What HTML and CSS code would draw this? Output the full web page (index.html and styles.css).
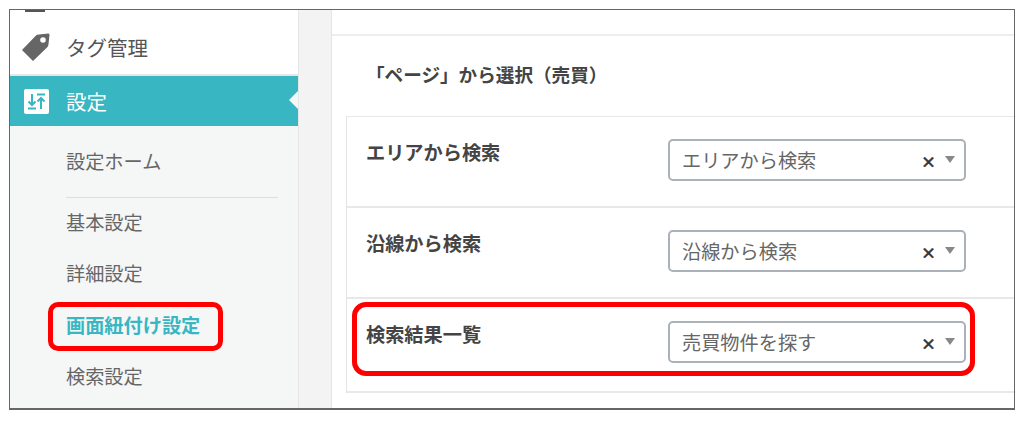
FILE: index.html
```html
<!DOCTYPE html>
<html lang="ja">
<head>
    <meta charset="UTF-8">
    <title>設定</title>
    <link rel="stylesheet" href="styles.css">
</head>
<body>
    <div class="frame">
        <div class="sidebar">
            <div class="menu-top"><span class="menu-stub"></span></div>
            <div class="menu-item">
                <svg class="menu-icon" width="30" height="30" viewBox="0 0 30 30">
                    <path d="M2 18 L16 3.500 Q17 2.500 19 2.500 L28.500 1.500 Q29.500 1.500 29.500 3 L28.500 12 Q28.500 14 27 15.500 L13 29 Z" fill="#666"/>
                    <circle cx="23" cy="8" r="2.800" fill="#fff"/>
                </svg>
                <span>タグ管理</span>
            </div>
            <div class="menu-item active">
                <svg class="menu-icon" width="30" height="30" viewBox="0 0 30 30">
                    <rect x="3" y="3" width="25" height="25" rx="2" fill="#fff"/>
                    <path d="M11 8 V19 M7.500 15.500 L11 19 L14.500 15.500 M7 22.500 H15 M20 23 V12 M16.500 15.500 L20 12 L23.500 15.500 M16 8.500 H24" stroke="#38b6c2" stroke-width="2" fill="none"/>
                </svg>
                <span>設定</span>
                <span class="active-notch"></span>
            </div>
            <ul class="submenu">
                <li class="sub-home">設定ホーム</li>
                <li class="sub-basic">基本設定</li>
                <li>詳細設定</li>
                <li class="current">画面紐付け設定<span class="mark mark-side"></span></li>
                <li>検索設定</li>
            </ul>
        </div>
        <div class="gutter"></div>
        <div class="main">
            <div class="main-top"></div>
            <h2 class="section-title">「ページ」から選択（売買）</h2>
            <div class="table">
                <div class="row">
                    <div class="row-label">エリアから検索</div>
                    <div class="select"><span>エリアから検索</span><b class="clear">×</b><i class="arrow"></i></div>
                </div>
                <div class="row">
                    <div class="row-label">沿線から検索</div>
                    <div class="select"><span>沿線から検索</span><b class="clear">×</b><i class="arrow"></i></div>
                </div>
                <div class="row">
                    <div class="row-label">検索結果一覧</div>
                    <div class="select"><span>売買物件を探す</span><b class="clear">×</b><i class="arrow"></i></div>
                    <span class="mark mark-row"></span>
                </div>
            </div>
        </div>
    </div>
</body>
</html>
```

FILE: styles.css
```css
* {
    box-sizing: border-box;
}
body {
    margin: 0;
    background: #fff;
    font-family: "Noto Sans CJK JP", "Noto Sans", sans-serif;
    color: #555;
}
.frame {
    display: flex;
    width: 1006px;
    height: 401px;
    margin: 9px 0 0 9px;
    border: 1px solid #666;
    border-bottom-width: 2px;
    overflow: hidden;
}
.sidebar {
    width: 289px;
    flex-shrink: 0;
    background: #f5f7f7;
    border-right: 1px solid #e6e6e6;
}
.menu-top {
    height: 3px;
    background: #fff;
}
.menu-stub {
    display: block;
    width: 20px;
    height: 2px;
    margin-left: 15px;
    background: #555;
}
.menu-item {
    display: flex;
    align-items: center;
    height: 63px;
    padding: 7px 0 0 10px;
    background: #fff;
    border-bottom: 2px solid #e6e6e6;
    font-size: 20.500px;
    position: relative;
}
.menu-item span {
    margin-left: 16px;
}
.menu-icon {
    flex-shrink: 0;
}
.menu-item.active {
    height: 50px;
    padding: 0 0 0 11px;
    background: #38b6c2;
    border-bottom: 0;
    color: #fff;
}
.menu-item.active span {
    margin-left: 15px;
}
.active-notch {
    position: absolute;
    right: 0;
    top: 15px;
    border: 9px solid transparent;
    border-left: 0;
    border-right-color: #f5f7f7;
}
.submenu {
    list-style: none;
    margin: 0;
    padding: 0 0 0 56px;
    font-size: 19.200px;
    color: #666;
}
.submenu li {
    height: 52px;
    line-height: 52px;
    position: relative;
}
.submenu .sub-home {
    height: 72px;
    padding-top: 9px;
    width: 212px;
    border-bottom: 1px solid #ddd;
}
.submenu .sub-basic {
    height: 49px;
    line-height: 48px;
}
.submenu .current {
    height: 51px;
    color: #38b6c2;
    font-weight: 700;
}
.gutter {
    width: 33px;
    flex-shrink: 0;
    background: #f3f3f3;
    border-right: 1px solid #e4e4e4;
}
.main {
    flex: 1;
    background: #fff;
}
.main-top {
    height: 26px;
    border-bottom: 2px solid #eee;
}
.section-title {
    height: 80px;
    margin: 0;
    padding: 24px 0 0 34px;
    font-size: 18.600px;
    line-height: 28px;
    font-weight: 700;
    color: #444;
}
.table {
    margin-left: 14px;
    border-left: 1px solid #e4e4e4;
    border-top: 1px solid #e8e8e8;
}
.row {
    display: flex;
    height: 91px;
    border-bottom: 2px solid #e8e8e8;
    padding: 21px 0 0 19px;
    position: relative;
}
.row:last-child {
    height: 94px;
}
.row-label {
    width: 302px;
    font-size: 19.200px;
    line-height: 28px;
    font-weight: 700;
    color: #444;
}
.select {
    display: flex;
    align-items: center;
    width: 298px;
    height: 42px;
    margin-top: 1px;
    padding: 0 9px 0 12px;
    background: #fff;
    border: 2px solid #aab1b9;
    border-radius: 5px;
    font-size: 19.200px;
    color: #666;
}
.select span {
    flex: 1;
}
.clear {
    font-size: 15px;
    font-weight: 700;
    color: #333;
    margin-right: 9px;
    padding-top: 2px;
    -webkit-text-stroke: 0.500px #333;
}
.arrow {
    border: 5.500px solid transparent;
    border-top: 7px solid #888;
    border-bottom: 0;
    margin-top: -1px;
}
.mark {
    position: absolute;
    border: 5px solid #f00;
    background: transparent;
}
.mark-side {
    left: -18px;
    top: 3px;
    width: 175px;
    height: 49px;
    border-radius: 10px;
}
.mark-row {
    left: 5px;
    top: 3px;
    width: 623px;
    height: 74px;
    border-radius: 14px;
}
```
